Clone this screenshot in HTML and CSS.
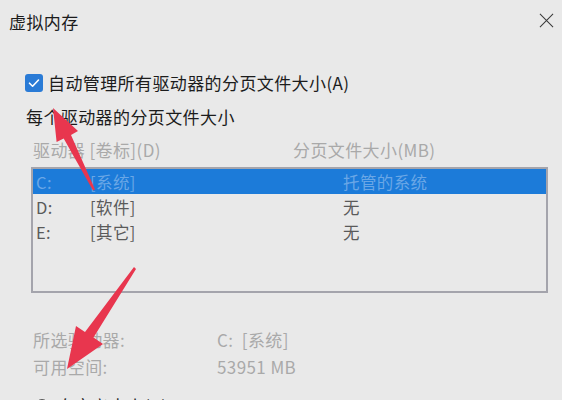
FILE: index.html
```html
<!DOCTYPE html>
<html lang="zh-CN">
<head>
<meta charset="utf-8">
<title>虚拟内存</title>
<link rel="stylesheet" href="styles.css">
</head>
<body>
<div class="dialog">
  <div class="titlebar">
    <span class="title">虚拟内存</span>
    <svg class="close" width="16" height="16" viewBox="0 0 16 16"><path d="M1 1 L15 15 M15 1 L1 15" stroke="#3a3a3a" stroke-width="1.1" fill="none"/></svg>
  </div>
  <div class="content">
    <div class="auto">
      <span class="checkbox"><svg width="18" height="18" viewBox="0 0 18 18"><path d="M4.5 9.2 L7.6 12.2 L13.5 6" stroke="#fff" stroke-width="1.6" fill="none" stroke-linecap="round" stroke-linejoin="round"/></svg></span>
      <span class="auto-label">自动管理所有驱动器的分页文件大小(A)</span>
    </div>
    <div class="group-title">每个驱动器的分页文件大小</div>
    <div class="cols">
      <span class="col-drive">驱动器 [卷标](D)</span>
      <span class="col-size">分页文件大小(MB)</span>
    </div>
    <div class="list">
      <div class="row selected"><span class="drv">C:</span><span class="lbl">[系统]</span><span class="size">托管的系统</span></div>
      <div class="row"><span class="drv">D:</span><span class="lbl">[软件]</span><span class="size">无</span></div>
      <div class="row"><span class="drv">E:</span><span class="lbl">[其它]</span><span class="size">无</span></div>
    </div>
    <div class="info">
      <span class="key">所选驱动器:</span><span class="val">C:&nbsp;&nbsp;[系统]</span>
      <span class="key">可用空间:</span><span class="val">53951 MB</span>
    </div>
    <div class="radio-row">
      <span class="radio"></span>
      <span class="radio-label">自定义大小(C):</span>
    </div>
  </div>
  <svg class="annot" width="562" height="400" viewBox="0 0 562 400">
    <polygon fill="#e8364e" points="53,108 78,131 71,135 95,189.5 93,190.5 63.7,138.4 56.6,142"/>
    <polygon fill="#e8364e" points="67,369 76,326 85,332 134,267 136,269 93.5,337.6 103,344"/>
  </svg>
</div>
</body>
</html>
```

FILE: styles.css
```css
html, body {
  margin: 0;
  padding: 0;
}
body {
  background: #e9e9e9;
  font-family: "Noto Sans CJK SC", "Noto Sans", sans-serif;
  font-size: 17px;
  letter-spacing: 0.4px;
  color: #1c1c1c;
}
.dialog {
  position: relative;
  width: 562px;
  height: 400px;
  overflow: hidden;
}
.titlebar {
  height: 44px;
  display: flex;
  align-items: center;
  justify-content: space-between;
  padding: 0 8px 0 9px;
}
.title {
  line-height: 24px;
}
.close {
  margin-top: -3px;
  width: 15px;
  height: 15px;
}
.content {
  padding-left: 25px;
}
.auto {
  margin-top: 27px;
  height: 24px;
  display: flex;
  align-items: center;
  gap: 5px;
}
.checkbox {
  width: 18px;
  height: 18px;
  border-radius: 3px;
  background: #2a7bd6;
  display: flex;
}
.auto-label {
  line-height: 24px;
}
.group-title {
  margin-top: 10px;
  margin-left: 1px;
  line-height: 24px;
}
.cols {
  margin-top: 9px;
  padding-left: 8px;
  display: flex;
  line-height: 24px;
  color: #a9a9a9;
}
.col-drive {
  width: 260px;
}
.list {
  margin-top: 5px;
  margin-left: 6px;
  width: 513px;
  height: 122px;
  border: 2px solid #a4a4ac;
}
.row {
  height: 25px;
  display: flex;
  align-items: center;
  padding-left: 3px;
  color: #5a5a5a;
  font-size: 16.5px;
}
.row.selected {
  background: #1c7bd9;
  color: #6aa7e6;
}
.drv {
  width: 54px;
}
.lbl {
  width: 253px;
}
.info {
  margin-top: 35px;
  padding-left: 8px;
  display: grid;
  grid-template-columns: 184px auto;
  row-gap: 3px;
  line-height: 24px;
  color: #a9a9a9;
}
.radio-row {
  margin-top: 15px;
  display: flex;
  align-items: center;
  gap: 8px;
  padding-left: 10px;
  line-height: 24px;
  height: 24px;
}
.radio {
  width: 12px;
  height: 12px;
  border: 1.5px solid #555;
  border-radius: 50%;
}
.radio-label {
  color: #222;
}
.annot {
  position: absolute;
  left: 0;
  top: 0;
  pointer-events: none;
}
```
